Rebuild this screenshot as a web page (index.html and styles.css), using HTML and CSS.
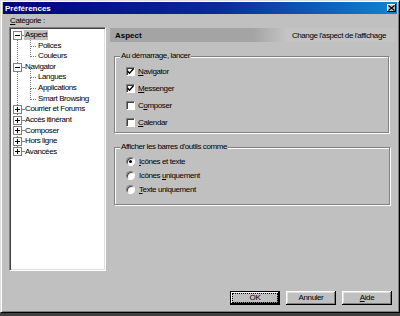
FILE: index.html
```html
<!DOCTYPE html>
<html lang="fr">
  <head>
    <meta charset="UTF-8" />
    <title>Préférences</title>
    <link rel="stylesheet" href="styles.css">
  </head>
  <body>
    <div class="window">
      <div class="titlebar">
        <span class="title">Préférences</span>
        <span class="close">
          <svg width="7" height="6" viewBox="0 0 7 6"><path d="M0.5 0.5l6 5M6.5 0.5l-6 5" stroke="#000" stroke-width="1.2" /></svg>
        </span>
      </div>

      <div class="main">
        <div class="sidebar">
          <div class="caption"><u>C</u>atégorie :</div>
          <div class="tree">
            <ul class="roots">
              <li>
                <div class="row">
                  <svg class="toggle" width="9" height="9"><rect x="0.5" y="0.5" width="8" height="8" fill="#fff" stroke="#808080" /><path d="M2 4.5h5" stroke="#000" /></svg>
                  <span class="dash"></span>
                  <span class="label selected">Aspect</span>
                </div>
                <ul class="children">
                  <li>Polices</li>
                  <li>Couleurs</li>
                </ul>
              </li>
              <li>
                <div class="row">
                  <svg class="toggle" width="9" height="9"><rect x="0.5" y="0.5" width="8" height="8" fill="#fff" stroke="#808080" /><path d="M2 4.5h5" stroke="#000" /></svg>
                  <span class="dash"></span>
                  <span class="label">Navigator</span>
                </div>
                <ul class="children">
                  <li>Langues</li>
                  <li>Applications</li>
                  <li>Smart Browsing</li>
                </ul>
              </li>
              <li>
                <div class="row">
                  <svg class="toggle" width="9" height="9"><rect x="0.5" y="0.5" width="8" height="8" fill="#fff" stroke="#808080" /><path d="M2 4.5h5M4.5 2v5" stroke="#000" /></svg>
                  <span class="dash"></span>
                  <span class="label">Courrier et Forums</span>
                </div>
              </li>
              <li>
                <div class="row">
                  <svg class="toggle" width="9" height="9"><rect x="0.5" y="0.5" width="8" height="8" fill="#fff" stroke="#808080" /><path d="M2 4.5h5M4.5 2v5" stroke="#000" /></svg>
                  <span class="dash"></span>
                  <span class="label">Accès itinérant</span>
                </div>
              </li>
              <li>
                <div class="row">
                  <svg class="toggle" width="9" height="9"><rect x="0.5" y="0.5" width="8" height="8" fill="#fff" stroke="#808080" /><path d="M2 4.5h5M4.5 2v5" stroke="#000" /></svg>
                  <span class="dash"></span>
                  <span class="label">Composer</span>
                </div>
              </li>
              <li>
                <div class="row">
                  <svg class="toggle" width="9" height="9"><rect x="0.5" y="0.5" width="8" height="8" fill="#fff" stroke="#808080" /><path d="M2 4.5h5M4.5 2v5" stroke="#000" /></svg>
                  <span class="dash"></span>
                  <span class="label">Hors ligne</span>
                </div>
              </li>
              <li>
                <div class="row">
                  <svg class="toggle" width="9" height="9"><rect x="0.5" y="0.5" width="8" height="8" fill="#fff" stroke="#808080" /><path d="M2 4.5h5M4.5 2v5" stroke="#000" /></svg>
                  <span class="dash"></span>
                  <span class="label">Avancées</span>
                </div>
              </li>
            </ul>
          </div>
        </div>

        <div class="panel">
          <div class="panel-header">
            <span class="panel-title">Aspect</span>
            <span class="panel-desc">Change l'aspect de l'affichage</span>
          </div>

          <fieldset class="group group-start">
            <legend>Au démarrage, lancer</legend>
            <div class="option">
              <span class="check"><svg width="7" height="7" viewBox="0 0 7 7"><path d="M0.5 3l2 2.2 4-4.4" fill="none" stroke="#000" stroke-width="1.4" /></svg></span>
              <span><u>N</u>avigator</span>
            </div>
            <div class="option">
              <span class="check"><svg width="7" height="7" viewBox="0 0 7 7"><path d="M0.5 3l2 2.2 4-4.4" fill="none" stroke="#000" stroke-width="1.4" /></svg></span>
              <span><u>M</u>essenger</span>
            </div>
            <div class="option">
              <span class="check"></span>
              <span>C<u>o</u>mposer</span>
            </div>
            <div class="option">
              <span class="check"></span>
              <span><u>C</u>alendar</span>
            </div>
          </fieldset>

          <fieldset class="group group-toolbar">
            <legend>Afficher les barres d'outils comme</legend>
            <div class="option radio-option">
              <span class="radio checked"></span>
              <span><u>I</u>cônes et texte</span>
            </div>
            <div class="option radio-option">
              <span class="radio"></span>
              <span>Icônes <u>u</u>niquement</span>
            </div>
            <div class="option radio-option">
              <span class="radio"></span>
              <span><u>T</u>exte uniquement</span>
            </div>
          </fieldset>
        </div>
      </div>

      <div class="buttons">
        <button type="button" class="btn default">OK</button>
        <button type="button" class="btn">Annuler</button>
        <button type="button" class="btn"><u>A</u>ide</button>
      </div>
    </div>
  </body>
</html>
```

FILE: styles.css
```css
html,
body {
  margin: 0;
  padding: 0;
  background-color: #404040;
}
body {
  font-family: "Liberation Sans", Arial, sans-serif;
  font-size: 8px;
  letter-spacing: -0.4px;
  color: #000;
}
.window {
  box-sizing: border-box;
  width: 400px;
  height: 313px;
  background-color: #c0c0c0;
  border-style: solid;
  border-width: 1px;
  border-color: #dfdfdf #000 #000 #dfdfdf;
  box-shadow: inset 1px 1px #fff, inset -1px -1px #808080;
  padding: 1px 2px 0 2px;
  display: flex;
  flex-direction: column;
}
.titlebar {
  height: 12px;
  background: linear-gradient(to right, #000080 0%, #0a2a9a 55%, #1084d0 100%);
  display: flex;
  align-items: center;
  justify-content: space-between;
  padding-left: 2px;
}
.title {
  color: #fff;
  font-weight: bold;
  letter-spacing: 0;
}
.close {
  box-sizing: border-box;
  width: 9px;
  height: 8px;
  margin-right: 1px;
  background-color: #c0c0c0;
  box-shadow: inset -1px -1px #000, inset 1px 1px #fff;
  display: flex;
  align-items: center;
  justify-content: center;
}
.close svg {
  display: block;
}

/* main area */
.main {
  display: flex;
  padding-left: 6px;
}
.sidebar {
  width: 97px;
}
.caption {
  height: 13px;
  line-height: 14px;
  padding-left: 1px;
}
.tree {
  box-sizing: border-box;
  height: 244px;
  background-color: #fff;
  border-style: solid;
  border-width: 1px;
  border-color: #808080 #fff #fff #808080;
  box-shadow: inset 1px 1px #404040, inset -1px -1px #dfdfdf;
  padding: 2px 0 0 3px;
  overflow: hidden;
}
.tree ul {
  list-style: none;
  margin: 0;
  padding: 0;
}
.roots {
  position: relative;
}
.roots::before {
  content: "";
  position: absolute;
  left: 4px;
  top: 5px;
  bottom: 6px;
  border-left: 1px dotted #808080;
}
.row {
  display: flex;
  align-items: center;
  height: 10.6px;
  white-space: nowrap;
}
.toggle {
  position: relative;
  display: block;
  flex: none;
}
.dash {
  width: 2px;
  border-top: 1px dotted #808080;
}
.label {
  padding: 0 1px;
  line-height: 10px;
}
.label.selected {
  background-color: #c0c0c0;
}
.children li {
  position: relative;
  height: 10.6px;
  line-height: 10.6px;
  padding-left: 25px;
  white-space: nowrap;
}
.children li::before {
  content: "";
  position: absolute;
  left: 17px;
  top: -5px;
  width: 5px;
  height: 10px;
  border-left: 1px dotted #808080;
  border-bottom: 1px dotted #808080;
}

/* right panel */
.panel {
  width: 286px;
  margin-left: 4px;
  padding-top: 14px;
}
.panel-header {
  height: 14px;
  display: flex;
  align-items: center;
  justify-content: space-between;
  padding: 0 10px 0 5px;
  background: linear-gradient(to right, #a4a4a4 0%, #a4a4a4 50%, #c4c4c4 62%, #c4c4c4 100%);
}
.panel-title {
  font-weight: bold;
  letter-spacing: 0;
}
.group {
  margin: 9px 0 0 4px;
  width: 275px;
  box-sizing: border-box;
  border: 1px solid #808080;
  box-shadow: inset 1px 1px #fff, 1px 1px #fff;
  padding: 2px 0 1px 11px;
}
.group legend {
  padding: 0 1px;
  margin-left: -6px;
  line-height: 10px;
  background-color: #c0c0c0;
}
.group-toolbar {
  margin-top: 9px;
  width: 276px;
  padding: 2px 0 8px 11px;
}
.option {
  display: flex;
  align-items: center;
  gap: 3px;
  height: 17px;
}
.radio-option {
  height: 14px;
  gap: 4px;
}
.check {
  box-sizing: border-box;
  width: 9px;
  height: 9px;
  background-color: #fff;
  border-style: solid;
  border-width: 1px;
  border-color: #808080 #fff #fff #808080;
  box-shadow: inset 1px 1px #404040;
  display: flex;
  align-items: center;
  justify-content: center;
}
.check svg {
  display: block;
}
.radio {
  box-sizing: border-box;
  width: 9px;
  height: 9px;
  border-radius: 50%;
  background-color: #fff;
  border-style: solid;
  border-width: 1px;
  border-color: #808080 #fff #fff #808080;
  box-shadow: inset 1px 1px #404040;
  display: flex;
  align-items: center;
  justify-content: center;
}
.radio.checked::after {
  content: "";
  width: 3px;
  height: 3px;
  border-radius: 50%;
  background-color: #000;
}

/* buttons */
.buttons {
  margin-top: auto;
  display: flex;
  justify-content: flex-end;
  gap: 6px;
  padding: 0 5px 7px 0;
}
.btn {
  box-sizing: border-box;
  width: 50px;
  height: 14px;
  padding: 0;
  font-family: inherit;
  font-size: 8px;
  letter-spacing: -0.4px;
  line-height: 1;
  color: #000;
  background-color: #c0c0c0;
  border: none;
  box-shadow: inset -1px -1px #000, inset 1px 1px #fff, inset -2px -2px #808080, inset 2px 2px #dfdfdf;
}
.btn.default {
  border: 1px solid #000;
  box-shadow: inset -1px -1px #000, inset 1px 1px #fff, inset -2px -2px #808080;
  outline: 1px dotted #000;
  outline-offset: -3px;
}
```
